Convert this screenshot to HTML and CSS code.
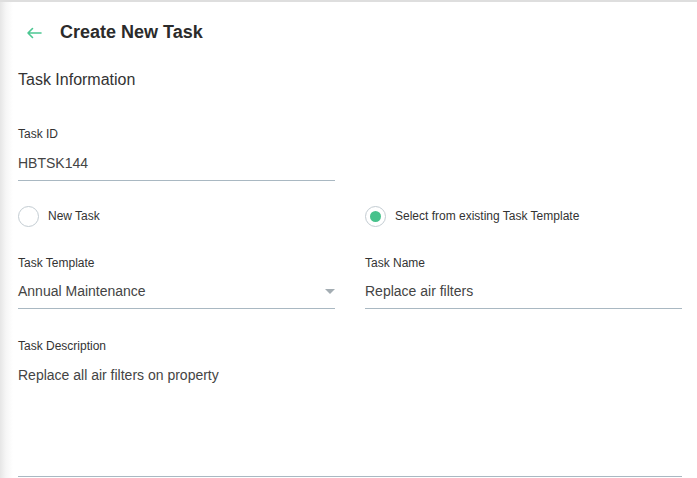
FILE: index.html
```html
<!DOCTYPE html>
<html>
<head>
<meta charset="utf-8">
<link rel="stylesheet" href="styles.css">
</head>
<body>
<div class="page">
  <header class="header">
    <svg class="back" width="16" height="12" viewBox="0 0 16 12"><path d="M15 6H2M6.5 1.5L2 6l4.5 4.5" fill="none" stroke="#4cc792" stroke-width="1.6" stroke-linecap="round" stroke-linejoin="round"/></svg>
    <h1 class="title">Create New Task</h1>
  </header>
  <h2 class="section">Task Information</h2>
  <div class="grid">
    <div class="field">
      <div class="label">Task ID</div>
      <div class="value first">HBTSK144</div>
    </div>
    <div></div>
    <label class="radio"><span class="circle"></span><span>New Task</span></label>
    <label class="radio"><span class="circle checked"></span><span>Select from existing Task Template</span></label>
    <div class="field">
      <div class="label">Task Template</div>
      <div class="value select">Annual Maintenance<span class="caret"></span></div>
    </div>
    <div class="field">
      <div class="label">Task Name</div>
      <div class="value">Replace air filters</div>
    </div>
    <div class="field wide">
      <div class="label">Task Description</div>
      <div class="value area">Replace all air filters on property</div>
    </div>
  </div>
</div>
</body>
</html>
```
FILE: styles.css
```css
html, body { margin: 0; padding: 0; }
body {
  font-family: "Liberation Sans", Arial, sans-serif;
  color: #333;
  background: #fff;
  width: 697px;
  height: 478px;
  overflow: hidden;
}
.page {
  height: 476px;
  border-top: 2px solid #dedede;
  background: linear-gradient(to right, #e6e6e6 0, #f6f6f6 6px, #fff 13px);
  padding: 0 15px 0 18px;
}
.header {
  display: flex;
  align-items: center;
  height: 61px;
}
.back { margin-left: 8px; margin-right: 18px; }
.title {
  margin: 0;
  font-size: 18px;
  font-weight: bold;
  color: #2b2b2b;
}
.section {
  margin: 7px 0 0;
  font-size: 16px;
  line-height: 20px;
  font-weight: normal;
  color: #333;
}
.grid {
  display: grid;
  grid-template-columns: 317px 317px;
  column-gap: 30px;
  margin-top: 36px;
}
.label {
  font-size: 12px;
  line-height: 16px;
  color: #333;
}
.value {
  margin-top: 11px;
  font-size: 14px;
  line-height: 18px;
  color: #444;
  padding-bottom: 8px;
  border-bottom: 1px solid #a9b8c2;
  position: relative;
}
.value.first { margin-top: 12px; }
.select .caret {
  position: absolute;
  right: 0;
  top: 7px;
  width: 0;
  height: 0;
  border-left: 5px solid transparent;
  border-right: 5px solid transparent;
  border-top: 5px solid #a4adb3;
}
.radio {
  display: flex;
  align-items: center;
  font-size: 12px;
  color: #333;
  height: 22px;
  margin-top: 24px;
  margin-bottom: 28px;
}
.circle {
  box-sizing: border-box;
  width: 21px;
  height: 21px;
  border: 1px solid #c3ccd2;
  border-radius: 50%;
  margin-right: 9px;
  display: flex;
  align-items: center;
  justify-content: center;
}
.circle.checked::after {
  content: "";
  width: 11px;
  height: 11px;
  border-radius: 50%;
  background: #47c28c;
}
.wide { grid-column: 1 / 3; margin-top: 29px; }
.area { margin-top: 12px; height: 102px; }
```
